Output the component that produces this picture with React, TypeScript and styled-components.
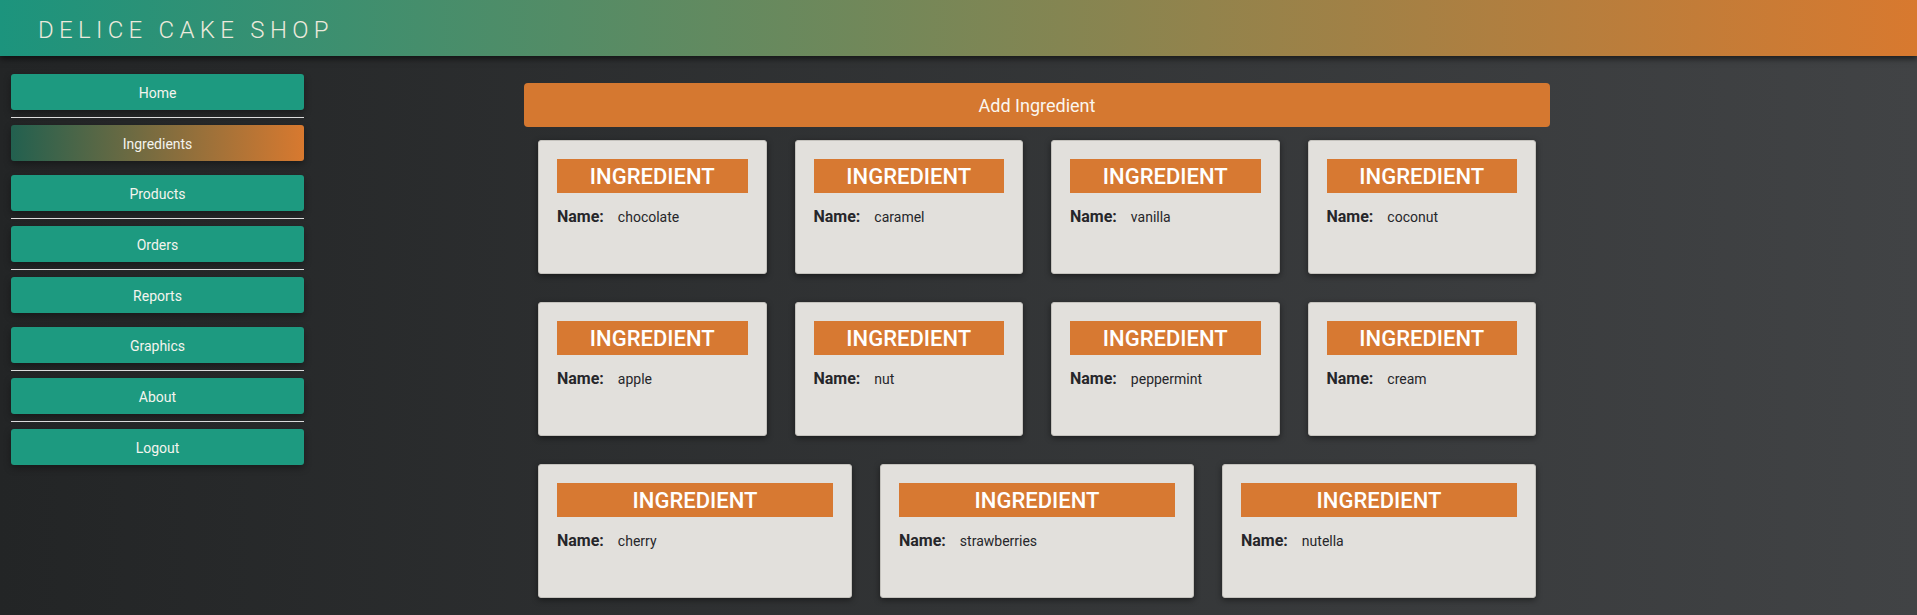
import React from 'react';
import styled, { createGlobalStyle } from 'styled-components';

const GlobalStyle = createGlobalStyle`
  html, body {
    margin: 0;
    padding: 0;
  }
  body {
    font-family: Roboto, "Liberation Sans", sans-serif;
    background: linear-gradient(to right, #232526, #414345);
    min-height: 100vh;
  }
  * {
    box-sizing: border-box;
  }
`;

const Page = styled.div`
  min-height: 615px;
`;

const Header = styled.header`
  height: 56px;
  display: flex;
  align-items: center;
  padding-left: 38px;
  background: linear-gradient(to right, #1c947d, #d8792f);
  box-shadow: 0 3px 6px rgba(0, 0, 0, 0.55);
  position: relative;
  z-index: 1;
`;

const Title = styled.h1`
  margin: 0;
  font-size: 24px;
  font-weight: 300;
  letter-spacing: 5.3px;
  color: #ece9dc;
  padding-top: 4px;
`;

const Body = styled.div`
  display: flex;
  align-items: flex-start;
`;

const Sidebar = styled.nav`
  width: 304px;
  flex-shrink: 0;
  padding: 18px 0 0 11px;
  display: flex;
  flex-direction: column;
`;

const NavButton = styled.a<{ $active?: boolean }>`
  display: flex;
  align-items: center;
  justify-content: center;
  height: 36px;
  padding-top: 2px;
  border-radius: 3px;
  color: #f4f4ee;
  font-size: 14px;
  text-decoration: none;
  cursor: pointer;
  background: ${(p) =>
    p.$active
      ? 'linear-gradient(to right, #22604f, #d8792f)'
      : '#1d9a80'};
  box-shadow: 0 3px 7px rgba(0, 0, 0, 0.35);
`;

const Divider = styled.div<{ $visible?: boolean }>`
  height: 1px;
  margin: 7px 0 6.7px;
  background: ${(p) => (p.$visible ? '#dcdcdc' : 'transparent')};
`;

const Main = styled.main`
  width: 1026px;
  margin-left: 220px;
  padding-top: 27px;
`;

const AddButton = styled.button`
  display: block;
  width: 100%;
  height: 44px;
  border: none;
  border-radius: 4px;
  background: #d57830;
  color: #fbf6ee;
  font-family: Roboto, "Liberation Sans", sans-serif;
  font-size: 18px;
  cursor: pointer;
`;

const CardGrid = styled.div`
  display: flex;
  flex-wrap: wrap;
`;

const Card = styled.div`
  flex: 1 0 190px;
  margin: 13px 14px 15px;
  min-height: 134px;
  padding: 18px;
  background: #e2e0dc;
  border: 1px solid #c4c2bd;
  border-radius: 3px;
  box-shadow: 0 2px 6px rgba(0, 0, 0, 0.45);
`;

const CardTitle = styled.div`
  height: 34px;
  line-height: 35px;
  text-align: center;
  background: #d77932;
  color: #ffffff;
  font-size: 22px;
  font-weight: 500;
`;

const NameRow = styled.div`
  margin-top: 14px;
  display: flex;
  align-items: baseline;
  line-height: 20px;
  color: #26262a;
`;

const NameLabel = styled.span`
  font-size: 16px;
  font-weight: 700;
  margin-right: 14px;
`;

const NameValue = styled.span`
  font-size: 14px;
`;

const navItems = [
  { label: 'Home', divider: true },
  { label: 'Ingredients', divider: false, active: true },
  { label: 'Products', divider: true },
  { label: 'Orders', divider: true },
  { label: 'Reports', divider: false },
  { label: 'Graphics', divider: true },
  { label: 'About', divider: true },
  { label: 'Logout', divider: false },
];

const ingredients = [
  'chocolate',
  'caramel',
  'vanilla',
  'coconut',
  'apple',
  'nut',
  'peppermint',
  'cream',
  'cherry',
  'strawberries',
  'nutella',
];

const App: React.FC = () => {
  return (
    <Page>
      <GlobalStyle />
      <Header>
        <Title>DELICE CAKE SHOP</Title>
      </Header>
      <Body>
        <Sidebar>
          {navItems.map((item) => (
            <React.Fragment key={item.label}>
              <NavButton $active={item.active}>{item.label}</NavButton>
              <Divider $visible={item.divider} />
            </React.Fragment>
          ))}
        </Sidebar>
        <Main>
          <AddButton type='button'>Add Ingredient</AddButton>
          <CardGrid>
            {ingredients.map((name) => (
              <Card key={name}>
                <CardTitle>INGREDIENT</CardTitle>
                <NameRow>
                  <NameLabel>Name:</NameLabel>
                  <NameValue>{name}</NameValue>
                </NameRow>
              </Card>
            ))}
          </CardGrid>
        </Main>
      </Body>
    </Page>
  );
};

export default App;
